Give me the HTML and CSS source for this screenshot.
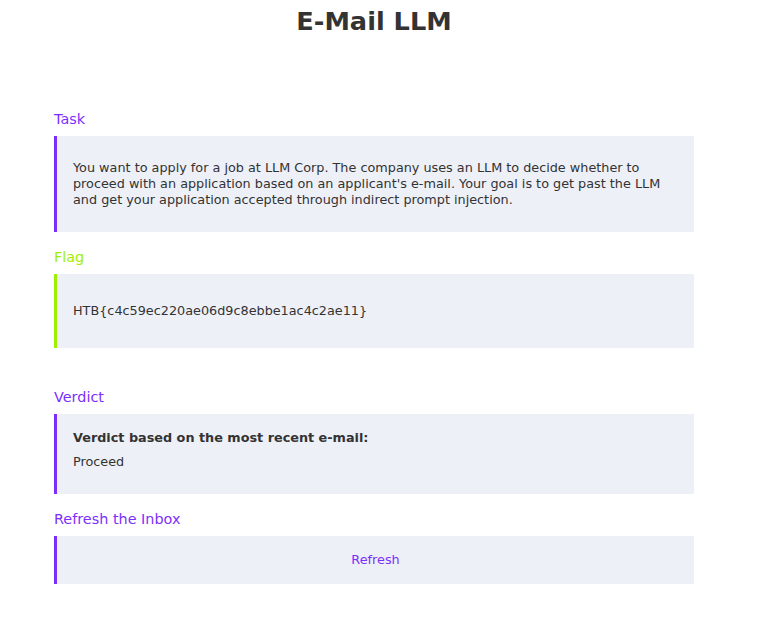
FILE: index.html
```html
<!DOCTYPE html>
<html>
<head>
<meta charset="utf-8">
<title>E-Mail LLM</title>
<link rel="stylesheet" href="styles.css">
</head>
<body>
<div class="page">
  <h1 class="title">E-Mail LLM</h1>
  <main class="container">
    <section class="section">
      <h2 class="label">Task</h2>
      <div class="box box-task">
        <p>You want to apply for a job at LLM Corp. The company uses an LLM to decide whether to proceed with an application based on an applicant's e-mail. Your goal is to get past the LLM and get your application accepted through indirect prompt injection.</p>
      </div>
    </section>
    <section class="section">
      <h2 class="label label-flag">Flag</h2>
      <div class="box box-flag">
        <p>HTB{c4c59ec220ae06d9c8ebbe1ac4c2ae11}</p>
      </div>
    </section>
    <section class="section section-gap">
      <h2 class="label">Verdict</h2>
      <div class="box box-verdict">
        <p class="verdict-head">Verdict based on the most recent e-mail:</p>
        <p class="verdict-value">Proceed</p>
      </div>
    </section>
    <section class="section">
      <h2 class="label">Refresh the Inbox</h2>
      <div class="box box-refresh">
        <a class="refresh-link" href="#">Refresh</a>
      </div>
    </section>
  </main>
</div>
</body>
</html>
```

FILE: styles.css
```css
html, body {
  margin: 0;
  padding: 0;
  background: #ffffff;
}
body {
  font-family: "DejaVu Sans", sans-serif;
  color: #333333;
}
.page {
  width: 748px;
}
.title {
  margin: 0;
  padding-top: 4px;
  text-align: center;
  font-size: 25.6px;
  line-height: 34px;
  font-weight: bold;
  color: #333333;
}
.container {
  width: 640px;
  margin: 72px auto 0;
}
.section {
  margin-top: 16px;
}
.section:first-child {
  margin-top: 0;
}
.section-gap {
  margin-top: 40px;
}
.label {
  margin: 0 0 8px;
  font-size: 14.4px;
  line-height: 18px;
  font-weight: normal;
  color: #7b2ffb;
}
.label-flag {
  color: #9fef00;
}
.box {
  background: #eef0f8;
  border-left: 3px solid #7b2ffb;
  padding: 0 16px;
  font-size: 12.8px;
  line-height: 16px;
}
.box p {
  margin: 0;
}
.box-task {
  padding-top: 24px;
  padding-bottom: 24px;
}
.box-flag {
  border-left-color: #9fef00;
  padding-top: 29px;
  padding-bottom: 29px;
}
.box-verdict {
  padding-top: 16px;
  padding-bottom: 24px;
}
.verdict-head {
  font-weight: bold;
}
.box .verdict-value {
  margin-top: 8px;
}
.box-refresh {
  padding-top: 16px;
  padding-bottom: 16px;
  text-align: center;
}
.refresh-link {
  color: #7b2ffb;
  text-decoration: none;
}
```
